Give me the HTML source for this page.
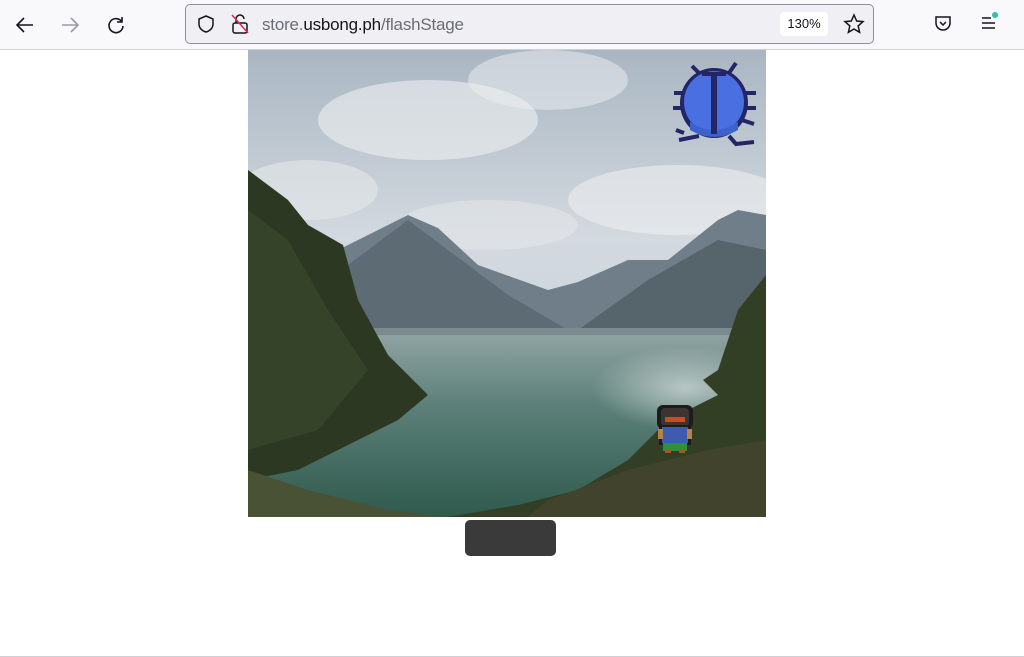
<!DOCTYPE html>
<html><head><meta charset="utf-8"><style>
html,body{margin:0;padding:0;width:1024px;height:657px;overflow:hidden;background:#fff;font-family:"Liberation Sans",sans-serif}
.bar{position:absolute;left:0;top:0;width:1024px;height:49px;background:#f9f9fb;border-bottom:1px solid #cfcfd8}
.url{position:absolute;left:185px;top:4px;width:687px;height:38px;border:1px solid #8f8f9d;border-radius:5px;background:#f0f0f4}
.urltext{position:absolute;left:76px;top:10px;font-size:17px;color:#6b6b75;letter-spacing:-0.2px}
.urltext b{font-weight:normal;color:#15141a}
.zoom{position:absolute;left:594px;top:7px;width:48px;height:24px;background:#fff;border-radius:4px;font-size:13px;text-align:center;line-height:24px;color:#15141a}
.ic{position:absolute}
.btn{position:absolute;left:465px;top:520px;width:91px;height:36px;background:#3a3a3a;border-radius:5px}
.bottom{position:absolute;left:0;top:656px;width:1024px;height:1px;background:#cfcfd8}
</style></head><body>
<div class="bar">
<svg class="ic" style="left:14px;top:14px" width="22" height="22" viewBox="0 0 22 22" fill="none" stroke="#15141a" stroke-width="1.6"><path d="M19 11H3M10 4l-7 7 7 7"/></svg>
<svg class="ic" style="left:59px;top:14px" width="22" height="22" viewBox="0 0 22 22" fill="none" stroke="#9a9aa2" stroke-width="1.6"><path d="M3 11h16M12 4l7 7-7 7"/></svg>
<svg class="ic" style="left:105px;top:14px" width="22" height="22" viewBox="0 0 22 22" fill="none" stroke="#15141a" stroke-width="1.6"><path d="M17 8A7 7 0 1 0 18 12M17 3v5h-5"/></svg>
<div class="url">
<svg class="ic" style="left:10px;top:9px" width="20" height="20" viewBox="0 0 20 20" fill="none" stroke="#15141a" stroke-width="1.5"><path d="M10 2l7 3v5c0 4-3 7-7 8-4-1-7-4-7-8V5z"/></svg>
<svg class="ic" style="left:44px;top:8px" width="20" height="22" viewBox="0 0 20 22" fill="none" stroke-width="1.5"><path d="M6 10V6a4 4 0 0 1 8 0" stroke="#15141a"/><rect x="3" y="10" width="14" height="10" rx="2" stroke="#15141a"/><path d="M2 2l16 18" stroke="#e22850"/></svg>
<div class="urltext">store.<b>usbong.ph</b>/flashStage</div>
<div class="zoom">130%</div>
<svg class="ic" style="left:657px;top:8px" width="22" height="22" viewBox="0 0 22 22" fill="none" stroke="#15141a" stroke-width="1.5"><path d="M11 2l2.7 6 6.3.6-4.8 4.3 1.4 6.4L11 16l-5.6 3.3 1.4-6.4L2 8.6 8.3 8z"/></svg>
</div>
<svg class="ic" style="left:933px;top:14px" width="20" height="20" viewBox="0 0 20 20" fill="none" stroke="#15141a" stroke-width="1.5"><path d="M3 3h14v6a7 7 0 0 1-14 0z"/><path d="M7 8l3 3 3-3"/></svg>
<svg class="ic" style="left:979px;top:10px" width="22" height="24" viewBox="0 0 22 24" fill="none" stroke="#15141a" stroke-width="1.5"><path d="M3 8h9M3 13h13M3 18h13"/><circle cx="16" cy="5" r="3" fill="#2ac3a2" stroke="none"/></svg>
</div>

<svg style="position:absolute;left:248px;top:50px" width="518" height="467" viewBox="0 0 518 467">
<defs>
<linearGradient id="sky" x1="0" y1="0" x2="0" y2="1"><stop offset="0" stop-color="#a9b6c2"/><stop offset=".4" stop-color="#d3d9df"/><stop offset="1" stop-color="#c3ccd4"/></linearGradient>
<linearGradient id="lake" x1="0" y1="0" x2="0" y2="1"><stop offset="0" stop-color="#8ea2a2"/><stop offset=".4" stop-color="#5b7f78"/><stop offset="1" stop-color="#2f5a4c"/></linearGradient>
<radialGradient id="glare" cx=".7" cy=".4" r=".35"><stop offset="0" stop-color="#d9e1e0" stop-opacity=".7"/><stop offset="1" stop-color="#d9e1e0" stop-opacity="0"/></radialGradient>
</defs>
<rect width="518" height="467" fill="url(#sky)"/>
<ellipse cx="180" cy="70" rx="110" ry="40" fill="#eef0f2" opacity=".6"/>
<ellipse cx="300" cy="30" rx="80" ry="30" fill="#eef0f2" opacity=".5"/>
<ellipse cx="430" cy="150" rx="110" ry="35" fill="#eceef0" opacity=".6"/>
<ellipse cx="60" cy="140" rx="70" ry="30" fill="#e4e7ea" opacity=".6"/>
<ellipse cx="240" cy="175" rx="90" ry="25" fill="#e8eaec" opacity=".5"/>
<path d="M90 200 L140 175 L160 165 L190 178 L230 215 L300 240 L330 232 L380 210 L420 210 L470 170 L490 160 L518 165 V290 H90z" fill="#6f7e89"/>
<path d="M100 215 L160 170 L200 200 L260 245 L320 280 H100z" fill="#5d6b74"/>
<path d="M330 280 L400 230 L470 190 L518 200 V290 H330z" fill="#56646c"/>
<rect x="90" y="278" width="428" height="12" fill="#7a8a8e"/>
<path d="M0 285 H518 V467 H0z" fill="url(#lake)"/>
<rect x="250" y="290" width="268" height="120" fill="url(#glare)"/>
<path d="M0 120 L20 135 L40 150 L60 175 L95 195 L110 250 L140 305 L180 345 L150 370 L100 395 L50 420 L0 430z" fill="#2c3822"/>
<path d="M0 160 L40 190 L80 260 L120 320 L70 380 L0 400z" fill="#38462b" opacity=".8"/>
<path d="M518 225 L490 260 L470 320 L455 330 L470 345 L420 370 L380 410 L330 440 L270 455 L200 467 H518z" fill="#333f24"/>
<path d="M0 420 L60 440 L140 460 L200 467 H0z" fill="#4a5236"/>
<path d="M300 450 L380 420 L460 400 L518 390 V467 H280z" fill="#46452e" opacity=".8"/>
<!-- bug -->
<g transform="translate(426,8)">
<path d="M25 15 L18 8 M55 15 L62 5 M10 35 H0 M8 50 H-1 M70 35 H82 M72 50 H82 M68 62 L80 66 M10 75 L2 72 M25 78 L5 82 M55 78 L62 86 L80 84" stroke="#232666" stroke-width="4" fill="none"/>
<ellipse cx="40" cy="45" rx="34" ry="35" fill="#232666"/>
<ellipse cx="40" cy="44" rx="30" ry="31" fill="#4a6fe0"/>
<path d="M16 64 Q40 80 64 64 V72 Q40 86 16 72z" fill="#3b63c9"/>
<rect x="37" y="14" width="6" height="62" fill="#232666"/>
<rect x="28" y="14" width="24" height="4" fill="#232666"/>
</g>
<!-- character -->
<g transform="translate(407,355)">
<rect x="2" y="0" width="36" height="24" rx="6" fill="#1d1b1c"/>
<rect x="6" y="3" width="28" height="18" rx="4" fill="#3d3431"/>
<rect x="10" y="12" width="20" height="5" fill="#d04a1e"/>
<rect x="4" y="20" width="32" height="20" fill="#1d1b1c"/>
<rect x="7" y="22" width="26" height="16" fill="#3d5bb0"/>
<rect x="3" y="24" width="5" height="10" fill="#b88348"/>
<rect x="32" y="24" width="5" height="10" fill="#b88348"/>
<rect x="8" y="38" width="24" height="8" fill="#2f8f3a"/>
<rect x="10" y="44" width="6" height="4" fill="#a05a20"/>
<rect x="24" y="44" width="6" height="4" fill="#a05a20"/>
</g>
</svg>
<div class="btn"></div>
<div class="bottom"></div>
</body></html>
